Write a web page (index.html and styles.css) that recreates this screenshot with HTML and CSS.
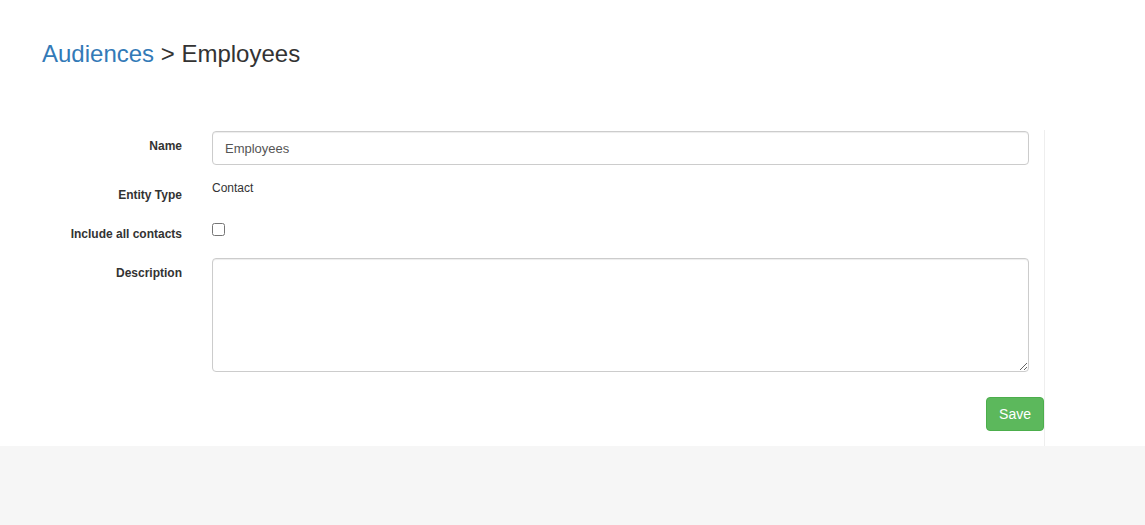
FILE: index.html
```html
<!DOCTYPE html>
<html lang="en">
  <head>
    <meta charset="UTF-8" />
    <meta name="viewport" content="width=device-width, initial-scale=1.0" />
    <title>Audiences - Employees</title>
    <link rel="stylesheet" href="styles.css">
  </head>
  <body>
    <div class="page">
      <div class="page-header">
        <h3><a href="#">Audiences</a> &gt; Employees</h3>
      </div>
      <form class="form-panel">
        <div class="form-row">
          <label for="name" class="top">Name</label>
          <input type="text" id="name" class="form-control" value="Employees" />
        </div>
        <div class="form-row">
          <label>Entity Type</label>
          <p class="static">Contact</p>
        </div>
        <div class="form-row">
          <label for="all">Include all contacts</label>
          <div><input type="checkbox" id="all" class="check" /></div>
        </div>
        <div class="form-row">
          <label for="desc">Description</label>
          <textarea id="desc" class="form-control area" rows="5"></textarea>
        </div>
        <div class="actions">
          <button type="button" class="btn-save">Save</button>
        </div>
      </form>
    </div>
  </body>
</html>
```

FILE: styles.css
```css
body {
  margin: 0;
  background-color: #f6f6f6;
  font-family: "Liberation Sans", Arial, sans-serif;
  color: #333;
}
.page {
  background-color: #fff;
}
.page-header {
  height: 130px;
  box-sizing: border-box;
  padding: 41px 42px 0;
}
.page-header h3 {
  margin: 0;
  font-size: 24px;
  font-weight: normal;
  line-height: 1.1;
  color: #333;
}
.page-header a {
  color: #337ab7;
  text-decoration: none;
}
.form-panel {
  width: 1045px;
  box-sizing: border-box;
  border-right: 1px solid #eee;
  padding-top: 1px;
  padding-bottom: 15px;
}
.form-row {
  display: grid;
  grid-template-columns: 182px 817px;
  column-gap: 30px;
  margin-bottom: 14px;
}
.form-row label {
  text-align: right;
  font-size: 12px;
  font-weight: bold;
  line-height: 17px;
  padding-top: 8px;
}
.form-row label.top {
  padding-top: 7px;
}
.static {
  margin: 1px 0 0;
  font-size: 12px;
  line-height: 17px;
}
.check {
  margin: 5px 0 0;
  width: 13px;
  height: 13px;
}
.form-control {
  box-sizing: border-box;
  width: 817px;
  height: 34px;
  padding: 6px 12px;
  font-family: inherit;
  font-size: 13px;
  color: #555;
  background-color: #fff;
  border: 1px solid #ccc;
  border-radius: 4px;
  box-shadow: inset 0 1px 1px rgba(0, 0, 0, 0.075);
}
.area {
  height: 114px;
  margin-top: 1px;
  display: block;
}
.actions {
  display: flex;
  justify-content: flex-end;
  margin-top: 25px;
}
.btn-save {
  height: 34px;
  padding: 6px 12px;
  font-family: inherit;
  font-size: 14px;
  color: #fff;
  background-color: #5cb85c;
  border: 1px solid #4cae4c;
  border-radius: 4px;
  cursor: pointer;
}
```
